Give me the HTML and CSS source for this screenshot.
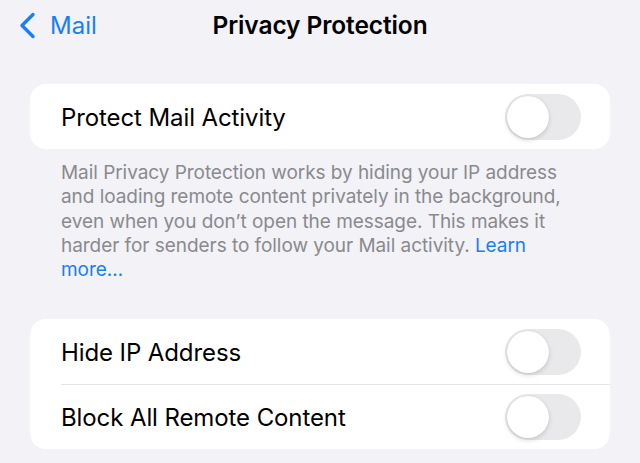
FILE: index.html
```html
<!DOCTYPE html>
<html lang="en">
<head>
<meta charset="utf-8">
<link rel="stylesheet" href="styles.css">
</head>
<body>
<header class="nav">
  <a class="back" href="#">
    <svg class="chev" width="18" height="27" viewBox="0 0 18 27"><path d="M15 2.5 L4 13.5 L15 24.5" fill="none" stroke="#1a7ff0" stroke-width="3.4" stroke-linecap="round" stroke-linejoin="round"/></svg>
    <span>Mail</span>
  </a>
  <h1 class="title">Privacy Protection</h1>
</header>
<main class="content">
  <section class="card">
    <div class="row">
      <span class="label">Protect Mail Activity</span>
      <span class="toggle"><span class="knob"></span></span>
    </div>
  </section>
  <p class="footer">Mail Privacy Protection works by hiding your IP address and loading remote content privately in the background, even when you don’t open the message. This makes it harder for senders to follow your Mail activity. <a href="#" class="link">Learn more…</a></p>
  <section class="card card2">
    <div class="row">
      <span class="label">Hide IP Address</span>
      <span class="toggle"><span class="knob"></span></span>
    </div>
    <div class="row">
      <span class="label">Block All Remote Content</span>
      <span class="toggle"><span class="knob"></span></span>
    </div>
  </section>
</main>
</body>
</html>
```
FILE: styles.css
```css
html, body {
  margin: 0;
  padding: 0;
  background: #f2f2f7;
  font-family: "Inter", "Liberation Sans", sans-serif;
  color: #000;
}
.nav {
  position: relative;
  height: 50px;
  display: flex;
  align-items: center;
  justify-content: center;
}
.back {
  position: absolute;
  left: 18px;
  top: 11px;
  display: flex;
  align-items: center;
  gap: 14px;
  color: #1a7ff0;
  text-decoration: none;
  font-size: 24px;
}
.chev { display: block; }
.title {
  margin: 0;
  font-size: 24.5px;
  font-weight: 600;
  letter-spacing: -0.1px;
}
.content {
  padding: 34px 30px 0;
}
.card {
  background: #fff;
  border-radius: 16px;
  overflow: hidden;
}
.row {
  height: 65px;
  display: flex;
  align-items: center;
  justify-content: space-between;
  padding: 0 29px 0 31px;
  position: relative;
}
.card2 .row + .row::before {
  content: "";
  position: absolute;
  left: 31px;
  right: 0;
  top: 0;
  height: 1px;
  background: #e3e3e8;
}
.label {
  font-size: 24px;
  letter-spacing: -0.1px;
  padding-top: 2px;
}
.toggle {
  width: 76px;
  height: 46px;
  border-radius: 23px;
  background: #e9e9eb;
  padding: 2px;
  box-sizing: border-box;
  display: flex;
  align-items: center;
}
.knob {
  width: 42px;
  height: 42px;
  border-radius: 50%;
  background: #fff;
  box-shadow: 0 2px 5px rgba(0,0,0,0.15), 0 0 1px rgba(0,0,0,0.1);
}
.footer {
  margin: 12px 0 0;
  padding: 0 31px;
  font-size: 19px;
  line-height: 24.3px;
  color: #8a8a8e;
  letter-spacing: -0.05px;
}
.link {
  color: #1a7ff0;
  text-decoration: none;
}
.card2 {
  margin-top: 37px;
}
```
